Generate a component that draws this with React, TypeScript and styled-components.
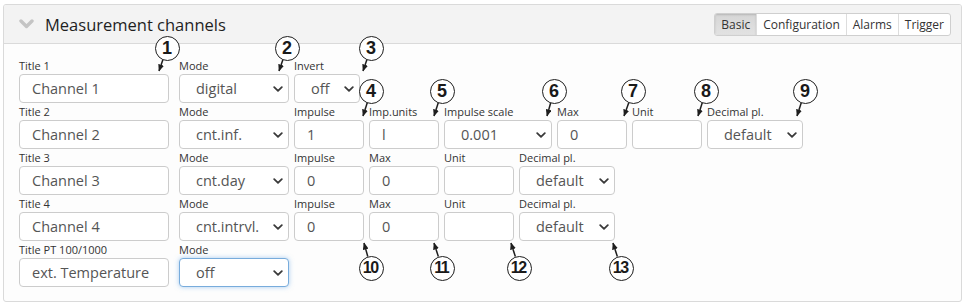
import React from 'react'
import styled, { createGlobalStyle, css } from 'styled-components'

const GlobalStyle = createGlobalStyle`
  html, body {
    margin: 0;
    padding: 0;
    background: #ffffff;
  }
  body {
    font-family: 'Open Sans', 'Liberation Sans', sans-serif;
  }
`

type FieldDef = {
  label: string
  width: number
  value: string
  kind: 'input' | 'select'
  focused?: boolean
}

type CalloutDef = {
  n: number
  cx: number
  cy: number
  tx: number
  ty: number
}

const title = (label: string, value: string): FieldDef => ({ label, width: 150, value, kind: 'input' })
const mode = (value: string, focused?: boolean): FieldDef => ({ label: 'Mode', width: 110, value, kind: 'select', focused })

const rows: FieldDef[][] = [
  [
    title('Title 1', 'Channel 1'),
    mode('digital'),
    { label: 'Invert', width: 66, value: 'off', kind: 'select' },
  ],
  [
    title('Title 2', 'Channel 2'),
    mode('cnt.inf.'),
    { label: 'Impulse', width: 70, value: '1', kind: 'input' },
    { label: 'Imp.units', width: 70, value: 'l', kind: 'input' },
    { label: 'Impulse scale', width: 108, value: '0.001', kind: 'select' },
    { label: 'Max', width: 70, value: '0', kind: 'input' },
    { label: 'Unit', width: 70, value: '', kind: 'input' },
    { label: 'Decimal pl.', width: 96, value: 'default', kind: 'select' },
  ],
  [
    title('Title 3', 'Channel 3'),
    mode('cnt.day'),
    { label: 'Impulse', width: 70, value: '0', kind: 'input' },
    { label: 'Max', width: 70, value: '0', kind: 'input' },
    { label: 'Unit', width: 70, value: '', kind: 'input' },
    { label: 'Decimal pl.', width: 96, value: 'default', kind: 'select' },
  ],
  [
    title('Title 4', 'Channel 4'),
    mode('cnt.intrvl.'),
    { label: 'Impulse', width: 70, value: '0', kind: 'input' },
    { label: 'Max', width: 70, value: '0', kind: 'input' },
    { label: 'Unit', width: 70, value: '', kind: 'input' },
    { label: 'Decimal pl.', width: 96, value: 'default', kind: 'select' },
  ],
  [title('Title PT 100/1000', 'ext. Temperature'), mode('off', true)],
]

const callouts: CalloutDef[] = [
  { n: 1, cx: 167, cy: 48, tx: 159, ty: 71 },
  { n: 2, cx: 287, cy: 48, tx: 279, ty: 71 },
  { n: 3, cx: 371, cy: 48, tx: 363, ty: 71 },
  { n: 4, cx: 371, cy: 91, tx: 363, ty: 116 },
  { n: 5, cx: 442, cy: 91, tx: 434, ty: 116 },
  { n: 6, cx: 554, cy: 91, tx: 547, ty: 116 },
  { n: 7, cx: 633, cy: 91, tx: 624, ty: 116 },
  { n: 8, cx: 706, cy: 91, tx: 698, ty: 116 },
  { n: 9, cx: 805, cy: 91, tx: 797, ty: 116 },
  { n: 10, cx: 371, cy: 268, tx: 364, ty: 243 },
  { n: 11, cx: 442, cy: 268, tx: 434, ty: 243 },
  { n: 12, cx: 519, cy: 268, tx: 511, ty: 243 },
  { n: 13, cx: 621, cy: 268, tx: 613, ty: 243 },
]

const tabs = ['Basic', 'Configuration', 'Alarms', 'Trigger']

export default function App() {
  return (
    <Page>
      <GlobalStyle />
      <Panel>
        <PanelHeader>
          <Collapse width="15" height="10" viewBox="0 0 15 10">
            <path d="M2 2 L7.5 7.5 L13 2" fill="none" stroke="#c4c4c4" strokeWidth="3.4" strokeLinecap="round" strokeLinejoin="round" />
          </Collapse>
          <PanelTitle>Measurement channels</PanelTitle>
          <TabGroup>
            {tabs.map((t, i) => (
              <Tab key={t} $active={i === 0}>
                {t}
              </Tab>
            ))}
          </TabGroup>
        </PanelHeader>
        <PanelBody>
          {rows.map((row, ri) => (
            <Row key={ri}>
              {row.map((f, fi) => (
                <Field key={fi} $width={f.width} $wide={fi === 0}>
                  <Label>{f.label}</Label>
                  {f.kind === 'input' ? (
                    <TextInput defaultValue={f.value} readOnly />
                  ) : (
                    <SelectBox>
                      <Select defaultValue={f.value} $focused={f.focused}>
                        <option value={f.value}>{f.value}</option>
                      </Select>
                      <SelectArrow width="10" height="6" viewBox="0 0 10 6">
                        <path d="M1.2 1.2 L5 4.8 L8.8 1.2" fill="none" stroke="#3a3a3a" strokeWidth="1.8" strokeLinecap="round" strokeLinejoin="round" />
                      </SelectArrow>
                    </SelectBox>
                  )}
                </Field>
              ))}
            </Row>
          ))}
        </PanelBody>
      </Panel>

      <ArrowLayer width="966" height="307" viewBox="0 0 966 307">
        <defs>
          <marker id="head" markerWidth="7" markerHeight="6" refX="6.5" refY="3" orient="auto" markerUnits="userSpaceOnUse">
            <path d="M0 0 L7 3 L0 6 Z" fill="#1e1e1e" />
          </marker>
        </defs>
        {callouts.map((c) => {
          const dx = c.tx - c.cx
          const dy = c.ty - c.cy
          const len = Math.hypot(dx, dy)
          const sx = c.cx + (dx / len) * 12
          const sy = c.cy + (dy / len) * 12
          return (
            <line key={c.n} x1={sx} y1={sy} x2={c.tx} y2={c.ty} stroke="#1e1e1e" strokeWidth="1.5" markerEnd="url(#head)" />
          )
        })}
      </ArrowLayer>

      {callouts.map((c) => (
        <Badge key={c.n} $two={c.n > 9} style={{ left: c.cx - 12.5, top: c.cy - 12.5 }}>
          {c.n}
        </Badge>
      ))}
    </Page>
  )
}

const Page = styled.div`
  position: relative;
  width: 966px;
  height: 307px;
  padding: 4px 4px 0 3px;
  box-sizing: border-box;
`

const Panel = styled.section`
  border: 1px solid #dadada;
  border-radius: 3px;
  background: #fdfdfd;
  overflow: hidden;
`

const PanelHeader = styled.header`
  height: 38px;
  display: flex;
  align-items: center;
  padding: 0 10px 0 15px;
  background: #f3f3f3;
  border-bottom: 1px solid #dadada;
`

const Collapse = styled.svg`
  flex: none;
  margin-right: 11px;
`

const PanelTitle = styled.h2`
  margin: 0;
  font-size: 16.5px;
  font-weight: 400;
  color: #1f1f1f;
`

const TabGroup = styled.div`
  margin-left: auto;
  display: flex;
  height: 21px;
  border: 1px solid #cfcfcf;
  border-radius: 3px;
  overflow: hidden;
  background: #ffffff;
`

const Tab = styled.div<{ $active?: boolean }>`
  display: flex;
  align-items: center;
  padding: 0 6px;
  font-size: 12px;
  color: #333333;
  & + & {
    border-left: 1px solid #dddddd;
  }
  ${(p) =>
    p.$active &&
    css`
      background: linear-gradient(#d6d6d6, #e2e2e2);
      box-shadow: inset 0 1px 2px rgba(0, 0, 0, 0.15);
    `}
`

const PanelBody = styled.div`
  display: flex;
  flex-direction: column;
  padding: 13px 15px 14px;
`

const Row = styled.div`
  display: flex;
  gap: 5px;
`

const Field = styled.div<{ $width: number; $wide?: boolean }>`
  display: flex;
  flex-direction: column;
  width: ${(p) => p.$width}px;
  margin-right: ${(p) => (p.$wide ? 5 : 0)}px;
`

const Label = styled.label`
  height: 17px;
  line-height: 17px;
  font-size: 11px;
  color: #333333;
  white-space: nowrap;
`

const controlBase = css`
  box-sizing: border-box;
  width: 100%;
  height: 29px;
  margin: 0;
  border: 1px solid #cccccc;
  border-radius: 4px;
  background: #ffffff;
  font-family: 'Open Sans', 'Liberation Sans', sans-serif;
  font-size: 14.5px;
  color: #555555;
  outline: none;
`

const TextInput = styled.input`
  ${controlBase};
  padding: 0 12px;
`

const SelectBox = styled.div`
  position: relative;
  width: 100%;
`

const Select = styled.select<{ $focused?: boolean }>`
  ${controlBase};
  appearance: none;
  padding: 0 28px 0 16px;
  ${(p) =>
    p.$focused &&
    css`
      border-color: #78acdc;
      box-shadow: 0 0 5px rgba(102, 165, 230, 0.55);
    `}
`

const SelectArrow = styled.svg`
  position: absolute;
  right: 6px;
  top: 12px;
  pointer-events: none;
`

const ArrowLayer = styled.svg`
  position: absolute;
  left: 0;
  top: 0;
  pointer-events: none;
`

const Badge = styled.div<{ $two?: boolean }>`
  position: absolute;
  box-sizing: border-box;
  width: 25px;
  height: 25px;
  border: 1.6px solid #1e1e1e;
  border-radius: 50%;
  background: #ffffff;
  display: flex;
  align-items: center;
  justify-content: center;
  font-family: 'Liberation Sans', Arial, sans-serif;
  font-weight: 700;
  font-size: ${(p) => (p.$two ? 16 : 18)}px;
  letter-spacing: ${(p) => (p.$two ? -1.5 : 0)}px;
  color: #1a1a1a;
  padding-right: ${(p) => (p.$two ? 1.5 : 0)}px;
`
